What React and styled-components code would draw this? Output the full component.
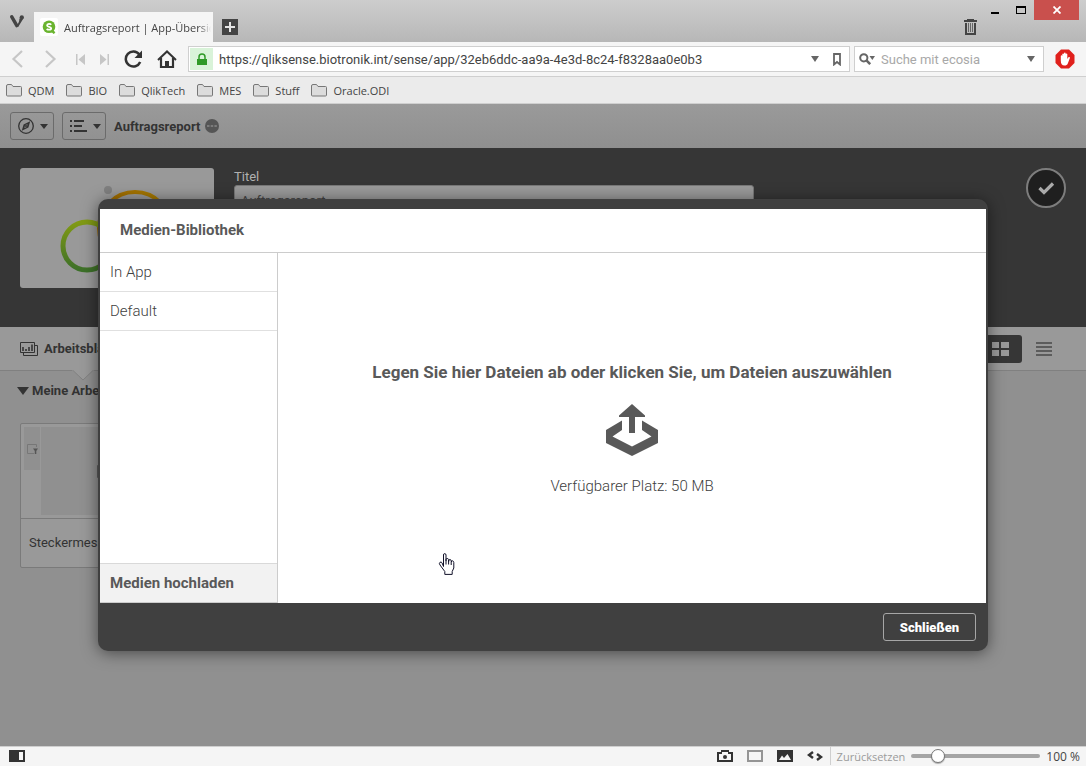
import React, { useState } from 'react';
import styled, { createGlobalStyle } from 'styled-components';

const uiFont = '"Open Sans", "Noto Sans", sans-serif';
const appFont = 'Roboto, "Noto Sans", sans-serif';

const GlobalStyle = createGlobalStyle`
  * {
    box-sizing: border-box;
  }

  body {
    margin: 0;
    font-family: ${uiFont};
    font-size: 11px;
    color: #444;
  }

  button, input {
    font: inherit;
    color: inherit;
  }

  svg {
    display: block;
    flex: none;
  }
`;

const Window = styled.div`
  display: flex;
  flex-direction: column;
  height: 100vh;
  overflow: hidden;
`;

/* ---------- browser chrome ---------- */

const PlainButton = styled.button`
  display: flex;
  align-items: center;
  justify-content: center;
  padding: 0;
  border: 0;
  background: none;
`;

const TitleBar = styled.header`
  display: flex;
  align-items: flex-end;
  flex: none;
  height: 42px;
  background: linear-gradient(#cdcdcd, #b7b7b7);
`;

const MenuButton = styled(PlainButton)`
  width: 34px;
  height: 42px;
`;

const Tab = styled.div`
  display: flex;
  align-items: center;
  gap: 6px;
  width: 179px;
  height: 30px;
  padding: 0 2px 0 6px;
  background: #f5f5f5;
`;

const Favicon = styled.span`
  display: flex;
  align-items: center;
  justify-content: center;
  flex: none;
  width: 18px;
  height: 18px;
  border-radius: 2px;
  background: #fff;
`;

const TabTitle = styled.span`
  flex: 1;
  overflow: hidden;
  white-space: nowrap;
  mask-image: linear-gradient(to left, transparent, #000 12px);
`;

const NewTab = styled(PlainButton)`
  width: 34px;
  height: 30px;
`;

const Trash = styled(PlainButton)`
  width: 24px;
  height: 30px;
  margin-left: auto;
`;

const WindowControls = styled.div`
  display: flex;
  align-self: flex-start;
  padding-right: 7px;
`;

const WindowButton = styled(PlainButton)`
  width: ${({ $close }) => ($close ? '45px' : '26px')};
  height: 20px;
  background: ${({ $close }) => ($close ? '#c9504d' : 'none')};
`;

const AddressBar = styled.div`
  display: flex;
  align-items: center;
  flex: none;
  height: 35px;
  border-bottom: 1px solid #cfcfcf;
  background: #f5f5f5;
`;

const NavButton = styled(PlainButton)`
  width: ${({ $narrow }) => ($narrow ? '24px' : '34px')};
  height: 34px;
`;

const Field = styled.div`
  display: flex;
  align-items: center;
  flex: ${({ $grow }) => ($grow ? '1' : '0 0 190px')};
  min-width: 0;
  height: 26px;
  margin-left: 4px;
  padding: 1px;
  border: 1px solid #cfcfcf;
  background: #fff;
`;

const LockBadge = styled.span`
  display: flex;
  align-items: center;
  justify-content: center;
  width: 23px;
  height: 22px;
  background: #d9f3d9;
`;

const FieldInput = styled.input`
  flex: 1;
  min-width: 0;
  padding: 0 6px;
  border: 0;
  outline: 0;
  background: none;
  font-family: ${appFont};
  font-size: 13px;
`;

const SearchInput = styled(FieldInput)`
  padding: 0 3px;

  &::placeholder {
    color: #a8a8a8;
    opacity: 1;
  }
`;

const FieldButton = styled(PlainButton)`
  width: 22px;
  height: 22px;
`;

const Blocker = styled(PlainButton)`
  width: 42px;
  height: 34px;
`;

const Bookmarks = styled.nav`
  display: flex;
  align-items: center;
  flex: none;
  gap: 12px;
  height: 27px;
  padding: 0 6px;
  border-bottom: 1px solid #cfcfcf;
  background: #ebebeb;
`;

const Bookmark = styled.a`
  display: flex;
  align-items: center;
  gap: 6px;
  color: #444;
  text-decoration: none;
`;

const StatusBar = styled.footer`
  display: flex;
  align-items: center;
  flex: none;
  height: 20px;
  padding-bottom: 1px;
  border-top: 1px solid #cfcfcf;
  background: #f5f5f5;
`;

const StatusButton = styled(PlainButton)`
  width: ${({ $wide }) => ($wide ? '34px' : '30px')};
  height: 18px;
`;

const Zoom = styled.div`
  display: flex;
  align-items: center;
  gap: 6px;
  height: 18px;
  padding: 0 6px;
  border-left: 1px solid #cfcfcf;
`;

const ResetButton = styled(PlainButton)`
  color: #9b9b9b;
`;

const ZoomSlider = styled.input`
  appearance: none;
  width: 129px;
  height: 4px;
  margin: 0;
  border-radius: 2px;
  background: #a5a5a5;

  &::-webkit-slider-thumb {
    appearance: none;
    width: 14px;
    height: 14px;
    border: 1px solid #777;
    border-radius: 50%;
    background: #fff;
    box-shadow: 0 1px 1px rgba(0, 0, 0, 0.3);
  }
`;

const ZoomValue = styled.span`
  min-width: 32px;
  font-size: 12px;
  text-align: right;
`;

const StatusSpacer = styled.div`
  flex: 1;
`;

/* ---------- app page ---------- */

const Page = styled.main`
  position: relative;
  display: flex;
  flex-direction: column;
  flex: 1;
  min-height: 0;
  background: #909090;
  color: #333;
  font-family: ${appFont};
  font-size: 13px;
`;

const Toolbar = styled.div`
  display: flex;
  align-items: center;
  gap: 8px;
  flex: none;
  height: 44px;
  padding: 0 10px;
  background: linear-gradient(#9a9a9a, #8f8f8f);
`;

const ToolbarButton = styled.button`
  display: flex;
  align-items: center;
  justify-content: center;
  gap: 6px;
  width: 44px;
  height: 28px;
  padding: 0 0 0 2px;
  border: 1px solid #6b6b6b;
  border-radius: 3px;
  background: none;
`;

const AppName = styled.strong`
  display: flex;
  align-items: center;
  gap: 5px;
`;

const Hero = styled.section`
  display: flex;
  align-items: flex-start;
  flex: none;
  gap: 20px;
  height: 179px;
  padding: 20px;
  background: #363636;
`;

const Thumbnail = styled.div`
  width: 194px;
  height: 120px;
  border-radius: 3px;
  background: #999;
`;

const TitleField = styled.label`
  display: flex;
  flex-direction: column;
  width: 520px;
  color: #b0b0b0;
  line-height: 17px;
`;

const TitleInput = styled.input`
  height: 30px;
  padding: 0 6px;
  border: 1px solid #777;
  border-radius: 3px;
  background: #999;
  color: #444;
`;

const DoneButton = styled.button`
  display: flex;
  align-items: center;
  justify-content: center;
  width: 40px;
  height: 40px;
  margin-left: auto;
  padding: 0;
  border: 2px solid #7d7d7d;
  border-radius: 50%;
  background: #1f1f1f;
`;

const TabRow = styled.div`
  display: flex;
  align-items: center;
  flex: none;
  height: 44px;
  padding: 0 20px;
  border-bottom: 1px solid #808080;
  background: #999;
`;

const SheetTab = styled.button`
  position: relative;
  display: flex;
  align-items: center;
  gap: 6px;
  height: 43px;
  padding: 0;
  border: 0;
  background: none;
  font-weight: 700;
`;

const TabPointer = styled.svg`
  position: absolute;
  top: 100%;
  left: 52px;
`;

const ViewSwitch = styled.div`
  display: flex;
  margin-left: auto;
`;

const ViewButton = styled(PlainButton)`
  width: 44px;
  height: 28px;
  border-radius: 3px;
  background: ${({ $active }) => ($active ? '#363636' : 'none')};
`;

const Sheets = styled.section`
  padding: 10px 20px;
`;

const SectionTitle = styled.h2`
  display: flex;
  align-items: center;
  gap: 3px;
  margin: 0 0 22px -3px;
  font-size: 13px;
  line-height: 20px;
`;

const SheetCard = styled.article`
  width: 166px;
  border: 1px solid #7a7a7a;
  border-radius: 2px;
  background: #999;
`;

const SheetPreview = styled.div`
  display: flex;
  align-items: flex-start;
  gap: 1px;
  height: 95px;
  padding: 3px;
  border-bottom: 1px solid #7a7a7a;
`;

const FilterPane = styled.div`
  display: flex;
  align-items: center;
  justify-content: center;
  width: 16px;
  height: 43px;
  background: #909090;
`;

const ChartPane = styled.div`
  display: flex;
  align-items: center;
  justify-content: center;
  flex: 1;
  height: 88px;
  background: #909090;
`;

const SheetName = styled.p`
  margin: 0;
  padding: 0 8px;
  line-height: 48px;
`;

/* ---------- dialog ---------- */

const Overlay = styled.div`
  position: absolute;
  inset: 0;
  display: flex;
  align-items: center;
  justify-content: center;
  padding: 0 98px;
`;

const Dialog = styled.div`
  flex: 1;
  padding: 10px 2px 0;
  border-radius: 10px;
  background: #404040;
  box-shadow: 0 2px 16px rgba(0, 0, 0, 0.5);
  color: #595959;
  font-size: 15px;
`;

const DialogTitle = styled.h1`
  margin: 0;
  padding: 0 20px;
  border-bottom: 1px solid #ccc;
  background: #fff;
  font-size: 15px;
  line-height: 43px;
`;

const DialogBody = styled.div`
  display: flex;
  min-height: 350px;
  background: #fff;
`;

const FolderList = styled.nav`
  display: flex;
  flex-direction: column;
  flex: 0 0 178px;
  border-right: 1px solid #ccc;
`;

const FolderButton = styled.button`
  height: 39px;
  padding: 0 10px;
  border: 0;
  border-bottom: 1px solid #e0e0e0;
  background: none;
  color: #404040;
  font-weight: 300;
  text-align: left;
`;

const UploadButton = styled(FolderButton)`
  height: 40px;
  margin-top: auto;
  border-top: 1px solid #d9d9d9;
  border-bottom-color: #ccc;
  background: #f2f2f2;
  color: #595959;
  font-weight: 700;
`;

const DropZone = styled.button`
  display: flex;
  flex-direction: column;
  align-items: center;
  justify-content: center;
  flex: 1;
  gap: 20px;
  padding: 0;
  border: 0;
  background: none;
  cursor: pointer;
`;

const DropText = styled.strong`
  font-size: 17px;
  line-height: 24px;
`;

const FreeSpace = styled.span`
  color: #404040;
  font-weight: 300;
  line-height: 20px;
`;

const DialogFooter = styled.div`
  display: flex;
  justify-content: flex-end;
  padding: 10px;
`;

const CloseButton = styled.button`
  width: 93px;
  height: 28px;
  padding: 0;
  border: 1px solid #a6a6a6;
  border-radius: 3px;
  background: none;
  color: #fff;
  font-size: 13px;
  font-weight: 900;
`;

const Pointer = styled.svg`
  position: fixed;
  top: 553px;
  left: 438px;
  pointer-events: none;
`;

/* ---------- icons ---------- */

const Caret = ({ color = '#333', w = 8, h = 6 }) => (
  <svg width={w} height={h} viewBox="0 0 8 6" preserveAspectRatio="none">
    <path d="M0 0h8L4 6z" fill={color} />
  </svg>
);

const VivaldiIcon = () => (
  <svg width="14" height="13" viewBox="0 0 14 13">
    <path d="M1.800 1.800L6.800 10.600" fill="none" stroke="#444" strokeWidth="3.400" strokeLinecap="round" />
    <path d="M6.800 10.600Q9.800 6.500 9.300 3.500L13.700 3 8.300 11.800z" fill="#444" />
    <circle cx="11.800" cy="2.300" r="2.100" fill="#444" />
  </svg>
);

const SenseIcon = () => (
  <svg width="14" height="14" viewBox="0 0 14 14">
    <circle cx="7" cy="6.800" r="6.300" fill="#6ab42f" />
    <path d="M9 10l3.600 3.200" stroke="#6ab42f" strokeWidth="2.400" />
    <path d="M9.200 4.700C8.400 3.700 5.100 3.500 5.100 5.400c0 1.800 4.100.9 4.100 2.900 0 1.900-3.500 1.700-4.500.5" fill="none" stroke="#fff" strokeWidth="1.800" />
  </svg>
);

const PlusIcon = () => (
  <svg width="16" height="16" viewBox="0 0 16 16">
    <path d="M0 0h16v16H0z" fill="#444" />
    <path d="M8 3v10M3 8h10" stroke="#e4e4e4" strokeWidth="2" />
  </svg>
);

const TrashIcon = () => (
  <svg width="13" height="16" viewBox="0 0 13 16">
    <path d="M0 1h3V0h7v1h3v2H0zM1 4h11v12H1zM3 4v10h7V4z" fill="#444" fillRule="evenodd" />
    <path d="M4.500 4v9M6.500 4v9M8.500 4v9" stroke="#666" />
  </svg>
);

const ChevronIcon = ({ right }) => (
  <svg width="12" height="18" viewBox="0 0 12 18">
    <path d={right ? 'M1 1l8.500 8L1 17' : 'M11 1L2.500 9l8.500 8'} fill="none" stroke="#c6c6c6" strokeWidth="2.200" />
  </svg>
);

const SkipIcon = ({ right }) => (
  <svg width="9" height="11" viewBox="0 0 9 11">
    <path d={right ? 'M0 0l6.500 5.500L0 11zM7.500 0H9v11H7.500z' : 'M9 0L2.500 5.500 9 11zM0 0h1.500v11H0z'} fill="#c6c6c6" />
  </svg>
);

const ReloadIcon = () => (
  <svg width="18" height="18" viewBox="0 0 18 18">
    <path d="M15.300 4.500A7.500 7.500 0 1 0 16.200 12" fill="none" stroke="#333" strokeWidth="2.500" />
    <path d="M18 .5V8h-7.500z" fill="#333" />
  </svg>
);

const HomeIcon = () => (
  <svg width="20" height="18" viewBox="0 0 20 18">
    <path d="M1 10L10 1.500 19 10" fill="none" stroke="#333" strokeWidth="2" />
    <path d="M4 8v9h12V8" fill="none" stroke="#333" strokeWidth="2.200" />
    <path d="M8 11h4v6H8z" fill="#333" />
  </svg>
);

const LockIcon = () => (
  <svg width="10" height="13" viewBox="0 0 10 13">
    <path d="M0 6h10v6H0z" fill="#2f9a27" />
    <path d="M2 7V4a3 3 0 0 1 6 0v3" fill="none" stroke="#2f9a27" strokeWidth="1.500" />
  </svg>
);

const MarkIcon = () => (
  <svg width="8" height="13" viewBox="0 0 8 13">
    <path d="M1 1h6v10.500L4 9 1 11.500z" fill="none" stroke="#666" strokeWidth="1.800" />
  </svg>
);

const SearchIcon = () => (
  <svg width="16" height="12" viewBox="0 0 16 12">
    <circle cx="4.800" cy="4.800" r="3.600" fill="none" stroke="#666" strokeWidth="2" />
    <path d="M7.200 7.200l4 4" stroke="#666" strokeWidth="2.500" />
    <path d="M10.500 3H16l-2.700 4z" fill="#666" />
  </svg>
);

const HandStopIcon = () => (
  <svg width="20" height="20" viewBox="0 0 20 20">
    <path d="M6 .5h8L19.500 6v8L14 19.500H6L.5 14V6z" fill="#e0201c" />
    <path d="M5.800 11.500V7c0-1 1.300-1 1.500 0V5.200c0-1.100 1.700-1.100 1.700 0v-.8c0-1.100 1.700-1.100 1.700 0v.8c0-1 1.600-1 1.600 0V10l1-1.600c.8-.9 1.900-.2 1.500.8l-2 5.300c-.6 1.400-1.700 2-3.300 2-2.600 0-3.700-1.800-3.700-5z" fill="#fff" />
  </svg>
);

const FolderIcon = () => (
  <svg width="16" height="13" viewBox="0 0 16 13">
    <path d="M.5 11V2Q.5.5 2 .5h3.500L7 2.500h7.500q1 0 1 1V11q0 1-1 1H1.500q-1 0-1-1z" fill="#dcdcdc" stroke="#777" />
  </svg>
);

const PanelIcon = () => (
  <svg width="16" height="12" viewBox="0 0 16 12">
    <path d="M0 0h16v12H0zM10 2v8h4V2z" fill="#333" fillRule="evenodd" />
  </svg>
);

const CameraIcon = () => (
  <svg width="16" height="12" viewBox="0 0 16 12">
    <path d="M0 2h4V0h8v2h4v10H0zM2 4v6h12V4h-3V2H5v2z" fill="#333" fillRule="evenodd" />
    <circle cx="8" cy="7" r="2" fill="#333" />
  </svg>
);

const FrameIcon = () => (
  <svg width="16" height="12" viewBox="0 0 16 12">
    <path d="M1 1h14v10H1z" fill="none" stroke="#959595" strokeWidth="2" />
  </svg>
);

const ImageIcon = () => (
  <svg width="16" height="12" viewBox="0 0 16 12">
    <path d="M0 0h16v12H0z" fill="#333" />
    <path d="M2 10L5 5.500l2 2.500L10.500 4 14 10z" fill="#f5f5f5" />
  </svg>
);

const CodeIcon = () => (
  <svg width="16" height="10" viewBox="0 0 16 10">
    <path d="M6 1L2 4l4 3M10 3l4 3-4 3" fill="none" stroke="#333" strokeWidth="2.400" />
  </svg>
);

const CompassIcon = () => (
  <svg width="16" height="16" viewBox="0 0 16 16">
    <circle cx="8" cy="8" r="7.300" fill="none" stroke="#333" strokeWidth="1.300" />
    <path d="M12.200 3.200L10.400 9.600 3.800 12.800 5.600 6.400z" fill="#333" />
    <path d="M9.600 6.200L8.900 8.900 6.400 9.900 7.100 7.100z" fill="#8a8a8a" />
    <circle cx="8" cy="8" r="1" fill="#333" />
  </svg>
);

const ListIcon = () => (
  <svg width="17" height="12" viewBox="0 0 17 12">
    <path d="M0 1h2M4 1h10M0 6h2M4 6h8M0 11h2M4 11h13" stroke="#333" strokeWidth="2" />
  </svg>
);

const DotsIcon = () => (
  <svg width="14" height="14" viewBox="0 0 14 14">
    <circle cx="7" cy="7" r="7" fill="#555" />
    <path d="M2 7h10" stroke="#888" strokeWidth="1.300" strokeDasharray="2.500 1.200" />
  </svg>
);

const RingsLogo = () => (
  <svg width="194" height="120" viewBox="0 0 194 120">
    <defs>
      <linearGradient id="green" x1="0" y1="0" x2="0" y2="1">
        <stop offset="0" stopColor="#819a14" />
        <stop offset="1" stopColor="#3d7029" />
      </linearGradient>
      <linearGradient id="orange" x1="0" y1="0" x2="1" y2="0">
        <stop offset="0" stopColor="#a06a00" />
        <stop offset="1" stopColor="#a67c00" />
      </linearGradient>
    </defs>
    <circle cx="115" cy="60" r="36" fill="none" stroke="url(#orange)" strokeWidth="4" />
    <circle cx="67" cy="78" r="24" fill="none" stroke="url(#green)" strokeWidth="5" />
    <circle cx="88" cy="22" r="4" fill="#7f7f7f" />
  </svg>
);

const CheckIcon = () => (
  <svg width="17" height="13" viewBox="0 0 17 13">
    <path d="M1.500 6l4.500 4.500L15 1.500" fill="none" stroke="#aaa" strokeWidth="3.200" />
  </svg>
);

const SheetIcon = () => (
  <svg width="18" height="14" viewBox="0 0 18 14">
    <path d="M.5.500h14v10H.5zM15 3.500h2.500v10H3.500V11" fill="none" stroke="#333" />
    <path d="M3 9V5M6 9V7M9 9V5M12 9V2.500" stroke="#333" strokeWidth="1.600" />
  </svg>
);

const GridIcon = () => (
  <svg width="17" height="14" viewBox="0 0 17 14">
    <path d="M0 0h7v6H0zM9 0h8v6H9zM0 8h7v6H0zM9 8h8v6H9z" fill="#999" />
  </svg>
);

const LinesIcon = () => (
  <svg width="16" height="14" viewBox="0 0 16 14">
    <path d="M0 1h16M0 5h16M0 9h16M0 13h16" stroke="#5c5c5c" strokeWidth="2" />
  </svg>
);

const FilterIcon = () => (
  <svg width="11" height="10" viewBox="0 0 11 10">
    <path d="M9.500 3V.5H.5v9H7" fill="none" stroke="#777" />
    <path d="M6 4.500h5L9.300 7v3H7.800V7z" fill="#555" />
  </svg>
);

const TableIcon = () => (
  <svg width="30" height="13" viewBox="0 0 30 13">
    <path d="M.5.500h29v12H.5zM0 4.500h30M0 8.500h30M10.500 0v13M20.500 0v13" fill="none" stroke="#5c5c5c" />
  </svg>
);

const UploadIcon = () => (
  <svg width="52" height="52" viewBox="0 0 52 52">
    <path d="M26 0l13 11.500v1.500h-10v16h-6V13H13v-1.500z" fill="#595959" />
    <path d="M16 16.500v9.500L6.500 32.500 26 42.500 45.500 32.500 36 26v-9.500L52 26v13L26 52 0 39V26z" fill="#595959" />
  </svg>
);

const HandPointer = () => (
  <Pointer width="18" height="22" viewBox="0 0 18 22">
    <path
      d="M5 13.500V2Q5 .6 6.200.6T7.500 2v6V6.500q0-1 1.200-1t1.400 1V8.500q.1-2 1.300-2t1.400 1.500v1q.1-1.400 1.200-1.200t1.300 1.700V15l-1.600 3.500v2.900H6.300v-2.900L1.500 12q-1.300-2 0-2.700t2 .5z"
      transform="translate(.5 0)"
      fill="#fff"
      stroke="#101028"
    />
    <path d="M8 8v3.500M10.600 8v3.500M13.200 9v3" stroke="#101028" />
  </Pointer>
);

const bookmarks = ['QDM', 'BIO', 'QlikTech', 'MES', 'Stuff', 'Oracle.ODI'];

function BrowserTop() {
  return (
    <>
      <TitleBar>
        <MenuButton aria-label="Menü"><VivaldiIcon /></MenuButton>
        <Tab>
          <Favicon><SenseIcon /></Favicon>
          <TabTitle>Auftragsreport | App-Übersicht</TabTitle>
        </Tab>
        <NewTab aria-label="Neuer Tab"><PlusIcon /></NewTab>
        <Trash aria-label="Papierkorb"><TrashIcon /></Trash>
        <WindowControls>
          <WindowButton aria-label="Minimieren">
            <svg width="8" height="8"><path d="M0 6h8v2H0z" /></svg>
          </WindowButton>
          <WindowButton aria-label="Maximieren">
            <svg width="10" height="8"><path d="M0 0h10v8H0zM1 2v5h8V2z" fillRule="evenodd" /></svg>
          </WindowButton>
          <WindowButton $close aria-label="Fenster schließen">
            <svg width="8" height="8"><path d="M.5.500l7 7M7.500.500l-7 7" stroke="#fff" strokeWidth="1.800" /></svg>
          </WindowButton>
        </WindowControls>
      </TitleBar>

      <AddressBar>
        <NavButton aria-label="Zurück"><ChevronIcon /></NavButton>
        <NavButton aria-label="Vorwärts"><ChevronIcon right /></NavButton>
        <NavButton $narrow aria-label="Zum Anfang"><SkipIcon /></NavButton>
        <NavButton $narrow aria-label="Zum Ende"><SkipIcon right /></NavButton>
        <NavButton aria-label="Neu laden"><ReloadIcon /></NavButton>
        <NavButton aria-label="Startseite"><HomeIcon /></NavButton>
        <Field $grow>
          <LockBadge><LockIcon /></LockBadge>
          <FieldInput
            aria-label="Adresse"
            defaultValue="https://qliksense.biotronik.int/sense/app/32eb6ddc-aa9a-4e3d-8c24-f8328aa0e0b3"
          />
          <FieldButton aria-label="Verlauf"><Caret color="#666" /></FieldButton>
          <FieldButton aria-label="Lesezeichen"><MarkIcon /></FieldButton>
        </Field>
        <Field>
          <FieldButton aria-label="Suchmaschine"><SearchIcon /></FieldButton>
          <SearchInput aria-label="Suche" placeholder="Suche mit ecosia" />
          <FieldButton aria-label="Suchverlauf"><Caret color="#666" /></FieldButton>
        </Field>
        <Blocker aria-label="Werbeblocker"><HandStopIcon /></Blocker>
      </AddressBar>

      <Bookmarks>
        {bookmarks.map((name) => (
          <Bookmark href="#" key={name}><FolderIcon />{name}</Bookmark>
        ))}
      </Bookmarks>
    </>
  );
}

function BrowserStatus() {
  const [zoom, setZoom] = useState(100);

  return (
    <StatusBar>
      <StatusButton $wide aria-label="Paneele"><PanelIcon /></StatusButton>
      <StatusSpacer />
      <StatusButton aria-label="Bildschirmfoto"><CameraIcon /></StatusButton>
      <StatusButton aria-label="Kacheln"><FrameIcon /></StatusButton>
      <StatusButton aria-label="Bilder"><ImageIcon /></StatusButton>
      <StatusButton aria-label="Seitenaktionen"><CodeIcon /></StatusButton>
      <Zoom>
        <ResetButton onClick={() => setZoom(100)}>Zurücksetzen</ResetButton>
        <ZoomSlider
          type="range"
          aria-label="Zoom"
          min="20"
          max="500"
          value={zoom}
          onChange={(e) => setZoom(Number(e.target.value))}
        />
        <ZoomValue>{zoom} %</ZoomValue>
      </Zoom>
    </StatusBar>
  );
}

function MediaDialog() {
  return (
    <Overlay>
      <Dialog role="dialog" aria-labelledby="media-title">
        <DialogTitle id="media-title">Medien-Bibliothek</DialogTitle>
        <DialogBody>
          <FolderList>
            <FolderButton>In App</FolderButton>
            <FolderButton>Default</FolderButton>
            <UploadButton>Medien hochladen</UploadButton>
          </FolderList>
          <DropZone>
            <DropText>Legen Sie hier Dateien ab oder klicken Sie, um Dateien auszuwählen</DropText>
            <UploadIcon />
            <FreeSpace>Verfügbarer Platz: 50 MB</FreeSpace>
          </DropZone>
        </DialogBody>
        <DialogFooter>
          <CloseButton>Schließen</CloseButton>
        </DialogFooter>
      </Dialog>
    </Overlay>
  );
}

function App() {
  return (
    <Window>
      <GlobalStyle />
      <BrowserTop />

      <Page>
        <Toolbar>
          <ToolbarButton aria-label="Navigation"><CompassIcon /><Caret h={5} /></ToolbarButton>
          <ToolbarButton aria-label="Liste"><ListIcon /><Caret h={5} /></ToolbarButton>
          <AppName>Auftragsreport <DotsIcon /></AppName>
        </Toolbar>

        <Hero>
          <Thumbnail><RingsLogo /></Thumbnail>
          <TitleField>
            Titel
            <TitleInput defaultValue="Auftragsreport" />
          </TitleField>
          <DoneButton aria-label="Fertig"><CheckIcon /></DoneButton>
        </Hero>

        <TabRow>
          <SheetTab>
            <SheetIcon />
            Arbeitsblätter
            <TabPointer width="22" height="11" viewBox="0 0 22 11">
              <path d="M0 0h22L11 10z" fill="#999" />
              <path d="M1 .5L11 10 21 .5" fill="none" stroke="#808080" />
            </TabPointer>
          </SheetTab>
          <ViewSwitch>
            <ViewButton $active aria-label="Rasteransicht"><GridIcon /></ViewButton>
            <ViewButton aria-label="Listenansicht"><LinesIcon /></ViewButton>
          </ViewSwitch>
        </TabRow>

        <Sheets>
          <SectionTitle><Caret w={12} h={8} />Meine Arbeitsblätter</SectionTitle>
          <SheetCard>
            <SheetPreview>
              <FilterPane><FilterIcon /></FilterPane>
              <ChartPane><TableIcon /></ChartPane>
            </SheetPreview>
            <SheetName>Steckermessung</SheetName>
          </SheetCard>
        </Sheets>

        <MediaDialog />
      </Page>

      <BrowserStatus />
      <HandPointer />
    </Window>
  );
}

export default App;
